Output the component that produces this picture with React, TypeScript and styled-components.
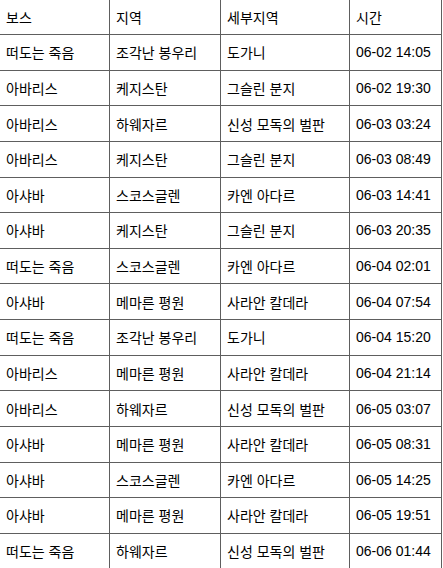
import React from 'react';
import styled, { createGlobalStyle } from 'styled-components';

const GlobalStyle = createGlobalStyle`
  html, body {
    margin: 0;
    padding: 0;
    background: #ffffff;
  }
`;

type Raid = { boss: string; region: string; area: string; time: string };

const raids: Raid[] = [
  { boss: '떠도는 죽음', region: '조각난 봉우리', area: '도가니', time: '06-02 14:05' },
  { boss: '아바리스', region: '케지스탄', area: '그슬린 분지', time: '06-02 19:30' },
  { boss: '아바리스', region: '하웨자르', area: '신성 모독의 벌판', time: '06-03 03:24' },
  { boss: '아바리스', region: '케지스탄', area: '그슬린 분지', time: '06-03 08:49' },
  { boss: '아샤바', region: '스코스글렌', area: '카엔 아다르', time: '06-03 14:41' },
  { boss: '아샤바', region: '케지스탄', area: '그슬린 분지', time: '06-03 20:35' },
  { boss: '떠도는 죽음', region: '스코스글렌', area: '카엔 아다르', time: '06-04 02:01' },
  { boss: '아샤바', region: '메마른 평원', area: '사라안 칼데라', time: '06-04 07:54' },
  { boss: '떠도는 죽음', region: '조각난 봉우리', area: '도가니', time: '06-04 15:20' },
  { boss: '아바리스', region: '메마른 평원', area: '사라안 칼데라', time: '06-04 21:14' },
  { boss: '아바리스', region: '하웨자르', area: '신성 모독의 벌판', time: '06-05 03:07' },
  { boss: '아샤바', region: '메마른 평원', area: '사라안 칼데라', time: '06-05 08:31' },
  { boss: '아샤바', region: '스코스글렌', area: '카엔 아다르', time: '06-05 14:25' },
  { boss: '아샤바', region: '메마른 평원', area: '사라안 칼데라', time: '06-05 19:51' },
  { boss: '떠도는 죽음', region: '하웨자르', area: '신성 모독의 벌판', time: '06-06 01:44' },
];

const Table = styled.div`
  display: grid;
  grid-template-columns: 110px 111px 129px 92px;
  grid-template-rows: 35px;
  grid-auto-rows: 35.64px;
  width: 442px;
  font-family: "Liberation Sans", "Noto Sans CJK KR", sans-serif;
  font-size: 14px;
  color: #000;
`;

const Cell = styled.div<{ $last?: boolean }>`
  display: flex;
  align-items: center;
  box-sizing: border-box;
  padding: 0 6px;
  border-bottom: 1px solid #5e5e5e;
  border-right: 1px solid #5e5e5e;
  white-space: nowrap;
  overflow: hidden;
`;

const HeadCell = styled(Cell)`
  font-weight: normal;
`;

const TimeCell = styled(Cell)`
  letter-spacing: 0;
`;

export default function App() {
  return (
    <>
      <GlobalStyle />
      <Table>
        <HeadCell>보스</HeadCell>
        <HeadCell>지역</HeadCell>
        <HeadCell>세부지역</HeadCell>
        <HeadCell>시간</HeadCell>
        {raids.map((r, i) => (
          <React.Fragment key={i}>
            <Cell>{r.boss}</Cell>
            <Cell>{r.region}</Cell>
            <Cell>{r.area}</Cell>
            <TimeCell>{r.time}</TimeCell>
          </React.Fragment>
        ))}
      </Table>
    </>
  );
}
